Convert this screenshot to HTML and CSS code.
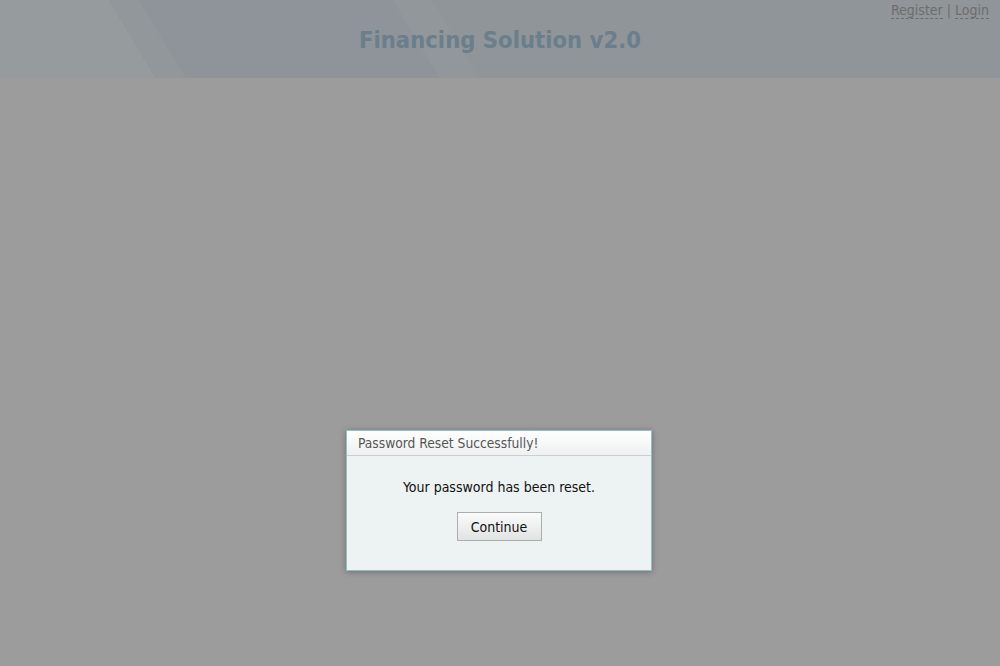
FILE: index.html
```html
<!DOCTYPE html>
<html lang="en">
<head>
    <meta charset="UTF-8">
    <meta name="viewport" content="width=device-width, initial-scale=1.0">
    <title>Financing Solution v2.0</title>
    <link rel="stylesheet" href="styles.css">
</head>
<body>
    <!-- Top banner -->
    <div class="header">
        <div class="userLinks">
            <a href="#" class="link">Register</a> | <a href="#" class="link">Login</a>
        </div>
        <h1 class="title">Financing Solution v2.0</h1>
    </div>

    <!-- Reset confirmation dialog -->
    <div class="main">
        <div class="dialog">
            <div class="dialogTitle">Password Reset Successfully!</div>
            <div class="dialogBody">
                <p class="message">Your password has been reset.</p>
                <button class="button" type="button">Continue</button>
            </div>
        </div>
    </div>
</body>
</html>
```

FILE: styles.css
```css
html, body {
    margin: 0;
    height: 100%;
}
body {
    font-family: "DejaVu Sans Condensed", "DejaVu Sans", sans-serif;
    background-color: #9c9c9d;
}
.header {
    position: relative;
    height: 78px;
    background-color: #8f9599;
    background-image: linear-gradient(59deg,
        #969b9d 0px, #969b9d 133px,
        #92979b 133px, #92979b 159px,
        #8e9499 159px, #8e9499 377px,
        #91979a 377px, #91979a 410px,
        #8f9599 410px);
}
.userLinks {
    position: absolute;
    top: 2px;
    right: 11px;
    font-size: 14px;
    color: #6d6d6d;
}
.link {
    color: #6d6d6d;
    text-decoration: none;
    border-bottom: 1px dashed #6d6d6d;
}
.title {
    margin: 0;
    padding-top: 25px;
    text-align: center;
    font-size: 23.6px;
    font-weight: bold;
    line-height: 30px;
    color: #6b7e8b;
}
.main {
    padding-top: 352px;
    padding-right: 2px;
    display: flex;
    justify-content: center;
}
.dialog {
    width: 304px;
    border: 1px solid #93bfc3;
    background-color: #edf2f2;
    box-shadow: 0 1px 6px rgba(0, 0, 0, 0.3);
}
.dialogTitle {
    height: 24px;
    line-height: 24px;
    padding-left: 11px;
    font-size: 13.7px;
    color: #555;
    background: linear-gradient(#ffffff, #eef1f1);
    border-bottom: 1px solid #c8d2d2;
}
.dialogBody {
    padding: 23px 0 29px;
    text-align: center;
}
.message {
    margin: 0 0 16px;
    font-size: 14px;
    line-height: 17px;
    color: #111;
}
.button {
    width: 85px;
    height: 29px;
    font-family: inherit;
    font-size: 14px;
    color: #111;
    border: 1px solid #a9afaf;
    background: linear-gradient(#fbfbfb, #e1e3e3);
    cursor: pointer;
}
```
